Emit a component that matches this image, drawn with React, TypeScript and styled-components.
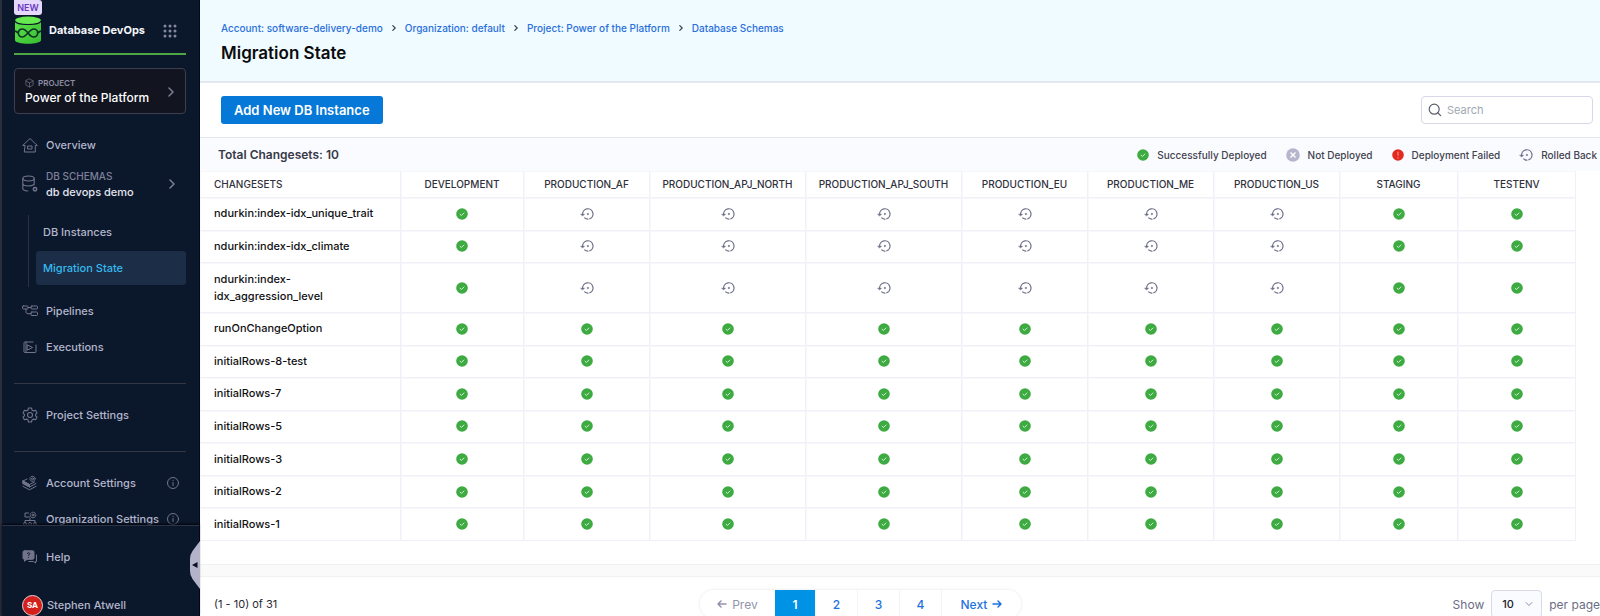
import React from "react";
import styled, { createGlobalStyle, css } from "styled-components";

const GlobalStyle = createGlobalStyle`
  *, *::before, *::after { box-sizing: border-box; }
  body {
    margin: 0;
    background: #fff;
    font-family: Inter, "Liberation Sans", sans-serif;
    font-size: 12px;
    color: #22222a;
    overflow: hidden;
  }
  a { text-decoration: none; color: inherit; }
  button, input, select { font-family: inherit; }
`;

/* ---------- shell ---------- */

const Shell = styled.div`
  display: flex;
  height: 100vh;
  overflow: hidden;
`;

const Sidebar = styled.aside`
  position: relative;
  flex: 0 0 200px;
  min-width: 0;
  display: flex;
  flex-direction: column;
  background: #0b182c;
  border-left: 2px solid #2b2f3b;
  border-right: 1px solid #040a18;
  color: #b3b5cb;
`;

const SidebarScroll = styled.div`
  flex: 1 1 0;
  min-height: 0;
  overflow: hidden;
  padding: 0 13px 0 12px;
`;

const SidebarFooter = styled.div`
  flex: none;
  height: 91px;
  padding: 13px 13px 0 12px;
  border-top: 1px solid #2c3342;
  box-shadow: 0 -1px 2px #01040c;
`;

/* ---------- sidebar parts ---------- */

const ModuleHeader = styled.div`
  display: flex;
  height: 55px;
  border-bottom: 2px solid #4fa443;
`;

const ModuleMark = styled.div`
  display: flex;
  flex-direction: column;
  width: 28px;
  gap: 1px;
`;

const NewBadge = styled.span`
  height: 15px;
  border-radius: 0 3px 3px 3px;
  background: #e6d8fa;
  color: #6938c0;
  font-size: 9px;
  font-weight: 600;
  line-height: 16px;
  text-align: center;
`;

const ModuleName = styled.span`
  flex: 1;
  padding: 22px 0 0 7px;
  color: #f6f6fb;
  font-size: 11px;
  font-weight: 700;
  line-height: 16px;
  white-space: nowrap;
`;

const IconButton = styled.button`
  display: flex;
  align-items: flex-start;
  padding: 24px 9px 0 0;
  border: 0;
  background: none;
`;

const ProjectCard = styled.button`
  display: flex;
  align-items: center;
  justify-content: space-between;
  width: 100%;
  height: 46px;
  margin: 13px 0;
  padding: 2px 9px 0 10px;
  border: 1px solid #3d3f50;
  border-radius: 4px;
  background: #12151f;
  color: #fff;
  text-align: left;
`;

const ProjectLabel = styled.span`
  display: flex;
  align-items: center;
  gap: 4px;
  height: 12px;
  color: #8d8ea6;
  font-size: 8px;
  font-weight: 600;
`;

const ProjectName = styled.span`
  display: block;
  font-size: 12px;
  font-weight: 500;
  line-height: 18px;
`;

const NavItem = styled.a<{ $tall?: boolean }>`
  display: flex;
  align-items: center;
  height: ${(p) => (p.$tall ? 42 : 36)}px;
  padding: 0 ${(p) => (p.$tall ? 9 : 7)}px 0 8px;
  font-size: 11px;
  font-weight: 500;
  white-space: nowrap;
  > svg:first-child { flex: none; margin-right: 8px; }
`;

const NavText = styled.span`
  flex: 1;
`;

const NavCaption = styled.span`
  display: block;
  color: #7f819a;
  font-size: 10px;
  font-weight: 500;
  line-height: 16px;
`;

const NavValue = styled.span`
  display: block;
  color: #e4e5ef;
  line-height: 16px;
`;

const SubNav = styled.div`
  margin: 10px 0 6px 14px;
  padding: 0 0 2px 7px;
  border-left: 1px solid #2b3140;
`;

const SubItem = styled.a<{ $active?: boolean }>`
  display: flex;
  align-items: center;
  height: 34px;
  margin-bottom: 2px;
  padding-left: 7px;
  border-radius: 3px;
  font-size: 11px;
  font-weight: 500;
  ${(p) =>
    p.$active &&
    css`
      margin-bottom: 0;
      background: #1b2d47;
      color: #37b9ee;
    `}
`;

const Divider = styled.hr`
  margin: 18px 0 13px;
  border: 0;
  border-top: 1px solid #333744;
`;

const Avatar = styled.span`
  display: flex;
  align-items: center;
  justify-content: center;
  width: 21px;
  height: 21px;
  margin-right: 4px;
  border: 1px solid #e8d5da;
  border-radius: 50%;
  background: #d3201c;
  color: #fff;
  font-size: 8px;
  font-weight: 700;
`;

const UserItem = styled(NavItem)`
  margin-top: 12px;
`;

const CollapseHandle = styled.button`
  position: absolute;
  right: -1px;
  bottom: 27px;
  padding: 0;
  border: 0;
  background: none;
  line-height: 0;
`;

/* ---------- main parts ---------- */

const Main = styled.main`
  flex: 1;
  min-width: 0;
`;

const PageHeader = styled.header`
  height: 83px;
  padding: 20px 20px 0 21px;
  border-bottom: 2px solid #e5e7f0;
  background: #effbff;
`;

const Breadcrumbs = styled.nav`
  display: flex;
  align-items: center;
  gap: 8px;
  height: 16px;
  color: #2b6fdb;
  font-size: 10px;
  font-weight: 500;
`;

const PageTitle = styled.h1`
  margin: 5px 0 0;
  color: #0b0b0d;
  font-size: 17px;
  font-weight: 600;
  line-height: 24px;
`;

const Toolbar = styled.div`
  display: flex;
  align-items: center;
  justify-content: space-between;
  height: 55px;
  padding: 0 7px 0 21px;
  border-bottom: 1px solid #e5e6f0;
`;

const PrimaryButton = styled.button`
  height: 28px;
  padding: 0 13px;
  border: 0;
  border-radius: 3px;
  background: #0678d7;
  color: #fff;
  font-size: 13px;
  font-weight: 600;
`;

const SearchBox = styled.label`
  display: flex;
  align-items: center;
  gap: 5px;
  width: 172px;
  height: 28px;
  padding: 0 7px 0 6px;
  border: 1px solid #d7d9e8;
  border-radius: 4px;
`;

const SearchInput = styled.input`
  flex: 1;
  min-width: 0;
  padding: 0;
  border: 0;
  outline: 0;
  background: none;
  font-size: 11px;
  &::placeholder { color: #a0a8b4; opacity: 1; }
`;

const SummaryBar = styled.div`
  display: flex;
  align-items: center;
  justify-content: space-between;
  height: 33px;
  padding: 0 3px 0 18px;
  background: #fafbff;
`;

const Total = styled.strong`
  color: #383946;
  font-size: 12px;
  font-weight: 600;
`;

const Legend = styled.ul`
  display: flex;
  gap: 19px;
  margin: 0;
  padding: 0;
  list-style: none;
`;

const LegendItem = styled.li`
  display: flex;
  align-items: center;
  gap: 8px;
  color: #42434f;
  font-size: 10px;
  font-weight: 500;
`;

const Grid = styled.table`
  width: calc(100% - 24px);
  height: 370px;
  table-layout: fixed;
  border-collapse: separate;
  border-spacing: 0;
`;

const Col = styled.col<{ $w: number }>`
  width: ${(p) => p.$w}px;
`;

const cell = css`
  padding: 7px 14px;
  border-right: 1px solid #f0f0f8;
  border-bottom: 1px solid #f0f0f8;
  box-shadow: inset 1px 1px 0 #f7f7fc;
`;

const HeadCell = styled.th<{ $first?: boolean }>`
  ${cell}
  height: 27px;
  padding: 0 ${(p) => (p.$first ? 14 : 0)}px;
  color: #30313d;
  font-size: 10px;
  font-weight: 500;
  text-align: ${(p) => (p.$first ? "left" : "center")};
`;

const NameCell = styled.th`
  ${cell}
  color: #101014;
  font-size: 11px;
  font-weight: 500;
  line-height: 17px;
  text-align: left;
`;

const StatusCell = styled.td`
  ${cell}
  text-align: center;
  line-height: 0;
`;

const Band = styled.div`
  height: 13px;
  margin-top: 23px;
  border: solid #f1f1f2;
  border-width: 1px 0;
  background: #fafafa;
`;

const Footer = styled.footer`
  display: flex;
  align-items: center;
  justify-content: space-between;
  padding: 13px 0 13px 14px;
`;

const RangeText = styled.span`
  color: #2a2a33;
  font-size: 11px;
`;

const Pager = styled.nav`
  display: flex;
  margin-right: 9px;
  border-radius: 14px;
  box-shadow: 0 0 3px rgba(40, 41, 61, 0.14);
`;

const PageButton = styled.button<{ $current?: boolean; $edge?: "prev" | "next" }>`
  display: flex;
  align-items: center;
  justify-content: center;
  gap: 5px;
  width: ${(p) => (p.$edge === "prev" ? 75 : p.$edge === "next" ? 80 : p.$current ? 40 : 42)}px;
  height: 28px;
  padding: 0;
  border: 0;
  border-left: ${(p) => (p.$current || p.$edge === "prev" ? "0" : "1px solid #f3f3f8")};
  border-radius: ${(p) => (p.$edge === "prev" ? "14px 0 0 14px" : p.$edge === "next" ? "0 14px 14px 0" : "0")};
  background: ${(p) => (p.$current ? "#0092e4" : "#fff")};
  color: ${(p) => (p.$current ? "#fff" : "#1f73dd")};
  font-size: 12px;
  font-weight: ${(p) => (p.$current ? 600 : 500)};
  &:disabled { color: #9293ab; font-weight: 400; }
`;

const PageSize = styled.label`
  display: flex;
  align-items: center;
  gap: 7px;
  color: #6b6d85;
  font-size: 12px;
  white-space: nowrap;
`;

const SelectWrap = styled.span`
  position: relative;
  display: flex;
  svg { position: absolute; right: 9px; top: 10px; pointer-events: none; }
`;

const Select = styled.select`
  appearance: none;
  width: 51px;
  height: 28px;
  padding: 0 0 0 10px;
  border: 1px solid #d9dae6;
  border-radius: 4px;
  background: #fafbff;
  color: #22222a;
  font-size: 11px;
  font-weight: 500;
`;

/* ---------- icons ---------- */

const Line = styled.svg.attrs({ fill: "none", stroke: "currentColor", strokeLinecap: "round", strokeLinejoin: "round" })``;

const MUTED = "#72748c";

const Chevron = ({ size = 10, color = "#7d7f97", w = 1.5 }: { size?: number; color?: string; w?: number }) => (
  <Line width={size} height={size} viewBox="0 0 10 10" color={color} strokeWidth={w}><path d="M3 1l4 4-4 4" /></Line>
);

const DatabaseLogo = () => (
  <svg width="28" height="28" viewBox="0 0 28 28">
    <defs>
      <linearGradient id="db" x1="0" y1="0" x2="1" y2="1">
        <stop offset="0" stopColor="#5fe34a" /><stop offset="1" stopColor="#36bd31" />
      </linearGradient>
    </defs>
    <path d="M1 4v20c0 5 26 5 26 0V4z" fill="url(#db)" />
    <ellipse cx="14" cy="4.5" rx="13" ry="4" fill="#66ea50" />
    <path d="M1 4.5c0 5.3 26 5.3 26 0" fill="none" stroke="#0b182c" strokeWidth="1.1" />
    <path d="M.5 15.200c2 0 3 1.500 4.500 2.200M27.500 15.200c-2 0-3 1.500-4.500 2.200M14 17c-2.500-3.300-4-4-5.700-4a4 4 0 0 0 0 8c2 0 3.400-1.500 5.700-4s3.700-4 5.700-4a4 4 0 0 1 0 8c-1.700 0-3.200-.7-5.700-4z" fill="none" stroke="#0c3328" strokeWidth="1.700" strokeLinejoin="round" />
  </svg>
);

const DotsGrid = () => (
  <svg width="14" height="14" viewBox="0 0 14 14" fill="#85879d">
    {[2, 7, 12].map((y) => [2, 7, 12].map((x) => <circle key={`${x}-${y}`} cx={x} cy={y} r="1.5" />))}
  </svg>
);

const CubeIcon = () => (
  <Line width="9" height="10" viewBox="0 0 10 10" color="#6d6f86" strokeWidth="0.8"><path d="M5 .5l4 2.200v4.600L5 9.500 1 7.300V2.700zM1 2.700l4 2.300 4-2.300M5 5v4.500" /></Line>
);

const HomeIcon = () => (
  <Line width="16" height="16" viewBox="0 0 16 16" color={MUTED}><path d="M2.700 8.500H.7L8 1.500l7.300 7h-2V15H2.700zM6 9h4v3H6z" /></Line>
);

const SchemaIcon = () => (
  <Line width="16" height="18" viewBox="0 0 16 18" color={MUTED} strokeWidth="1.1">
    <ellipse cx="6.5" cy="3.5" rx="5.7" ry="2.5" />
    <path d="M.8 3.500v10c0 1.200 2 2.300 5 2.500M12.200 3.500v6.300M.8 8.500c0 1.400 2.600 2.500 5.700 2.500 2.500 0 4-.5 5.700-1.500" />
    <circle cx="13" cy="14.2" r="1.7" strokeWidth="1.5" />
  </Line>
);

const PipelineIcon = () => (
  <Line width="16" height="12" viewBox="0 0 16 12" color={MUTED}>
    <rect x=".5" y="1" width="5.5" height="3" rx=".8" /><rect x="9" y="1" width="6.5" height="3" rx=".8" /><rect x="9" y="7" width="6.5" height="3.5" rx=".8" />
    <path d="M6 2.500h3M4 4v2.500c0 1.500.5 2.200 2 2.200h3" />
  </Line>
);

const ExecutionIcon = () => (
  <Line width="16" height="13" viewBox="0 0 16 13" color={MUTED}>
    <path d="M11 1H3c-.7 0-1 .3-1 1v8.500c0 .7.3 1 1 1h10c.7 0 1-.3 1-1V4M5.500 4l5 2.500-5 2.500zM4 1v10.500" />
  </Line>
);

const GearIcon = () => (
  <Line width="16" height="16" viewBox="0 0 16 16" color={MUTED} strokeWidth="1.1">
    <path d="M6.500 1h3l.5 2 1.600.9 2-.6L15 5.900 13.600 7.300v1.500L15 10.200l-1.400 2.500-2-.6-1.600.9-.5 2h-3L6 13l-1.600-.9-2 .6L1 10.200l1.400-1.400V7.300L1 5.900l1.400-2.600 2 .6L6 3z" />
    <circle cx="8" cy="8" r="2.5" />
  </Line>
);

const LayersIcon = () => (
  <Line width="16" height="16" viewBox="0 0 16 16" color={MUTED}>
    <path d="M1 6l4-2M1 6l6.500 3.500 5-2.500M1 8.500L7.500 12 14 8.500M1 11.300l6.500 3.500 6.500-3.500" />
    <path d="M1 6l6.500 3.500V12L1 8.500z" fill="currentColor" />
    <circle cx="10.5" cy="3.8" r="2.6" strokeDasharray="1.4 1" /><circle cx="10.5" cy="3.8" r="1" />
  </Line>
);

const OrgIcon = () => (
  <Line width="16" height="16" viewBox="0 0 16 16" color={MUTED}>
    <path d="M6.500 2H3v4h4.500M3 12V9.500h10V12M8 7.500v2" />
    <circle cx="11" cy="4" r="2.8" strokeDasharray="1.4 1" /><circle cx="11" cy="4" r="1" />
    <circle cx="3" cy="13" r="1.5" /><circle cx="8" cy="13" r="1.5" /><circle cx="13" cy="13" r="1.5" />
  </Line>
);

const InfoIcon = () => (
  <Line width="12" height="12" viewBox="0 0 12 12" color={MUTED}><circle cx="6" cy="6" r="5.5" /><path d="M6 5.500v3M6 3.300v.2" /></Line>
);

const HelpIcon = () => (
  <Line width="16" height="14" viewBox="0 0 16 14" color={MUTED}>
    <path d="M2.500.8h8c1 0 1.500.5 1.500 1.500v5.500c0 1-.5 1.500-1.500 1.500H5l-2.500 2V9.300C1.500 9.300 1 8.800 1 7.800V2.300C1 1.300 1.500.8 2.500.8z" fill="currentColor" />
    <path d="M14.500 5v6.500h-1V13l-2-1.500H7" />
    <path d="M5.300 3.600c.3-1.200 2.400-1.200 2.400.1 0 .8-1.200.9-1.200 1.700M6.500 7.300v.1" stroke="#0b182c" />
  </Line>
);

const HandleIcon = () => (
  <svg width="10" height="48" viewBox="0 0 10 48"><path d="M10 0L2.500 10Q0 13.500 0 18v12q0 4.500 2.500 8L10 48z" fill="#b3b4ca" /><path d="M2 24l5.500-3v6z" fill="#0b101c" /></svg>
);

const SearchIcon = () => (
  <Line width="14" height="14" viewBox="0 0 14 14" color="#5c5e6e" strokeWidth="1.2"><circle cx="6.2" cy="6.2" r="5" /><path d="M10 10l2.700 2.700" /></Line>
);

const SuccessIcon = () => (
  <svg width="12" height="12" viewBox="0 0 12 12" role="img" aria-label="Successfully Deployed"><circle cx="6" cy="6" r="5.8" fill="#3dab42" /><path d="M3.800 6l1.600 1.500 2.800-2.800" fill="none" stroke="#d3f0d2" strokeWidth="1" /></svg>
);

const NotDeployedIcon = () => (
  <svg width="14" height="14" viewBox="0 0 14 14"><circle cx="7" cy="7" r="6.8" fill="#b5b6cd" /><path d="M4.500 4.500l5 5M9.500 4.500l-5 5" stroke="#fff" strokeWidth="1.4" /></svg>
);

const FailedIcon = () => (
  <svg width="12" height="12" viewBox="0 0 12 12"><circle cx="6" cy="6" r="5.8" fill="#e32a20" /><path d="M6 2.800v4M6 8.200v1.200" stroke="#f58a80" strokeWidth="1.2" /></svg>
);

const RolledBackIcon = () => (
  <Line width="14" height="12" viewBox="0 0 14 12" color="#6c6e88" strokeWidth="1.2" role="img" aria-label="Rolled Back">
    <path d="M2.600 6.300A5.200 5.200 0 1 1 9.800 10.800M7.900 11.200A5 5 0 0 1 4.700 9.900" />
    <path d="M.8 6.100h3.800L2.700 8z" fill="currentColor" strokeWidth=".4" />
    <circle cx="7.8" cy="6" r=".7" fill="currentColor" strokeWidth=".5" />
  </Line>
);

const Arrow = ({ back }: { back?: boolean }) => (
  <Line width="10" height="10" viewBox="0 0 10 10" strokeWidth="1.5">
    <path d={back ? "M9 5H1M4 2L1 5l3 3" : "M1 5h8M6 2l3 3-3 3"} />
  </Line>
);

/* ---------- data ---------- */

const crumbs = ["Account: software-delivery-demo", "Organization: default", "Project: Power of the Platform", "Database Schemas"];

const environments = [
  { name: "DEVELOPMENT", width: 123 },
  { name: "PRODUCTION_AF", width: 126, rollback: true },
  { name: "PRODUCTION_APJ_NORTH", width: 156, rollback: true },
  { name: "PRODUCTION_APJ_SOUTH", width: 156, rollback: true },
  { name: "PRODUCTION_EU", width: 126, rollback: true },
  { name: "PRODUCTION_ME", width: 126, rollback: true },
  { name: "PRODUCTION_US", width: 126, rollback: true },
  { name: "STAGING", width: 118 },
  { name: "TESTENV", width: 118 },
];

const changesets = [
  { name: "ndurkin:index-idx_unique_trait", rolledBack: true },
  { name: "ndurkin:index-idx_climate", rolledBack: true },
  { name: "ndurkin:index-idx_aggression_level", rolledBack: true },
  { name: "runOnChangeOption" },
  { name: "initialRows-8-test" },
  { name: "initialRows-7" },
  { name: "initialRows-5" },
  { name: "initialRows-3" },
  { name: "initialRows-2" },
  { name: "initialRows-1" },
];

export default function App() {
  return (
    <Shell>
      <GlobalStyle />
      <Sidebar>
        <SidebarScroll>
          <ModuleHeader>
            <ModuleMark><NewBadge>NEW</NewBadge><DatabaseLogo /></ModuleMark>
            <ModuleName>Database DevOps</ModuleName>
            <IconButton aria-label="Switch module"><DotsGrid /></IconButton>
          </ModuleHeader>
          <ProjectCard>
            <span>
              <ProjectLabel><CubeIcon />PROJECT</ProjectLabel>
              <ProjectName>Power of the Platform</ProjectName>
            </span>
            <Chevron />
          </ProjectCard>
          <nav>
            <NavItem href="#overview"><HomeIcon /><NavText>Overview</NavText></NavItem>
            <NavItem href="#schemas" $tall>
              <SchemaIcon />
              <NavText><NavCaption>DB SCHEMAS</NavCaption><NavValue>db devops demo</NavValue></NavText>
              <Chevron />
            </NavItem>
            <SubNav>
              <SubItem href="#instances">DB Instances</SubItem>
              <SubItem href="#migration" $active aria-current="page">Migration State</SubItem>
            </SubNav>
            <NavItem href="#pipelines"><PipelineIcon /><NavText>Pipelines</NavText></NavItem>
            <NavItem href="#executions"><ExecutionIcon /><NavText>Executions</NavText></NavItem>
            <Divider />
            <NavItem href="#project-settings"><GearIcon /><NavText>Project Settings</NavText></NavItem>
            <Divider />
            <NavItem href="#account-settings"><LayersIcon /><NavText>Account Settings</NavText><InfoIcon /></NavItem>
            <NavItem href="#organization-settings"><OrgIcon /><NavText>Organization Settings</NavText><InfoIcon /></NavItem>
          </nav>
        </SidebarScroll>
        <SidebarFooter>
          <NavItem href="#help"><HelpIcon /><NavText>Help</NavText></NavItem>
          <UserItem href="#profile"><Avatar>SA</Avatar><NavText>Stephen Atwell</NavText></UserItem>
        </SidebarFooter>
        <CollapseHandle aria-label="Collapse sidebar"><HandleIcon /></CollapseHandle>
      </Sidebar>

      <Main>
        <PageHeader>
          <Breadcrumbs aria-label="Breadcrumb">
            {crumbs.map((c, i) => (
              <React.Fragment key={c}>
                {i > 0 && <Chevron size={6} color="#3f4254" w={2} />}
                <a href="#crumb">{c}</a>
              </React.Fragment>
            ))}
          </Breadcrumbs>
          <PageTitle>Migration State</PageTitle>
        </PageHeader>
        <Toolbar>
          <PrimaryButton>Add New DB Instance</PrimaryButton>
          <SearchBox><SearchIcon /><SearchInput type="search" placeholder="Search" aria-label="Search" /></SearchBox>
        </Toolbar>
        <SummaryBar>
          <Total>Total Changesets: 10</Total>
          <Legend>
            <LegendItem><SuccessIcon />Successfully Deployed</LegendItem>
            <LegendItem><NotDeployedIcon />Not Deployed</LegendItem>
            <LegendItem><FailedIcon />Deployment Failed</LegendItem>
            <LegendItem><RolledBackIcon />Rolled Back</LegendItem>
          </Legend>
        </SummaryBar>
        <Grid>
          <colgroup>
            <Col $w={201} />
            {environments.map((e) => <Col key={e.name} $w={e.width} />)}
          </colgroup>
          <thead>
            <tr>
              <HeadCell $first scope="col">CHANGESETS</HeadCell>
              {environments.map((e) => <HeadCell key={e.name} scope="col">{e.name}</HeadCell>)}
            </tr>
          </thead>
          <tbody>
            {changesets.map((c) => (
              <tr key={c.name}>
                <NameCell scope="row">{c.name}</NameCell>
                {environments.map((e) => (
                  <StatusCell key={e.name}>{c.rolledBack && e.rollback ? <RolledBackIcon /> : <SuccessIcon />}</StatusCell>
                ))}
              </tr>
            ))}
          </tbody>
        </Grid>
        <Band />
        <Footer>
          <RangeText>(1 - 10) of 31</RangeText>
          <Pager aria-label="Pagination">
            <PageButton $edge="prev" disabled><Arrow back />Prev</PageButton>
            <PageButton $current aria-current="page">1</PageButton>
            <PageButton>2</PageButton>
            <PageButton>3</PageButton>
            <PageButton>4</PageButton>
            <PageButton $edge="next">Next<Arrow /></PageButton>
          </Pager>
          <PageSize>
            Show
            <SelectWrap>
              <Select defaultValue="10" aria-label="Rows per page"><option>10</option><option>20</option><option>50</option></Select>
              <Line width="8" height="8" viewBox="0 0 8 8" color="#8b8da5"><path d="M1 2.500l3 3 3-3" /></Line>
            </SelectWrap>
            per page
          </PageSize>
        </Footer>
      </Main>
    </Shell>
  );
}
